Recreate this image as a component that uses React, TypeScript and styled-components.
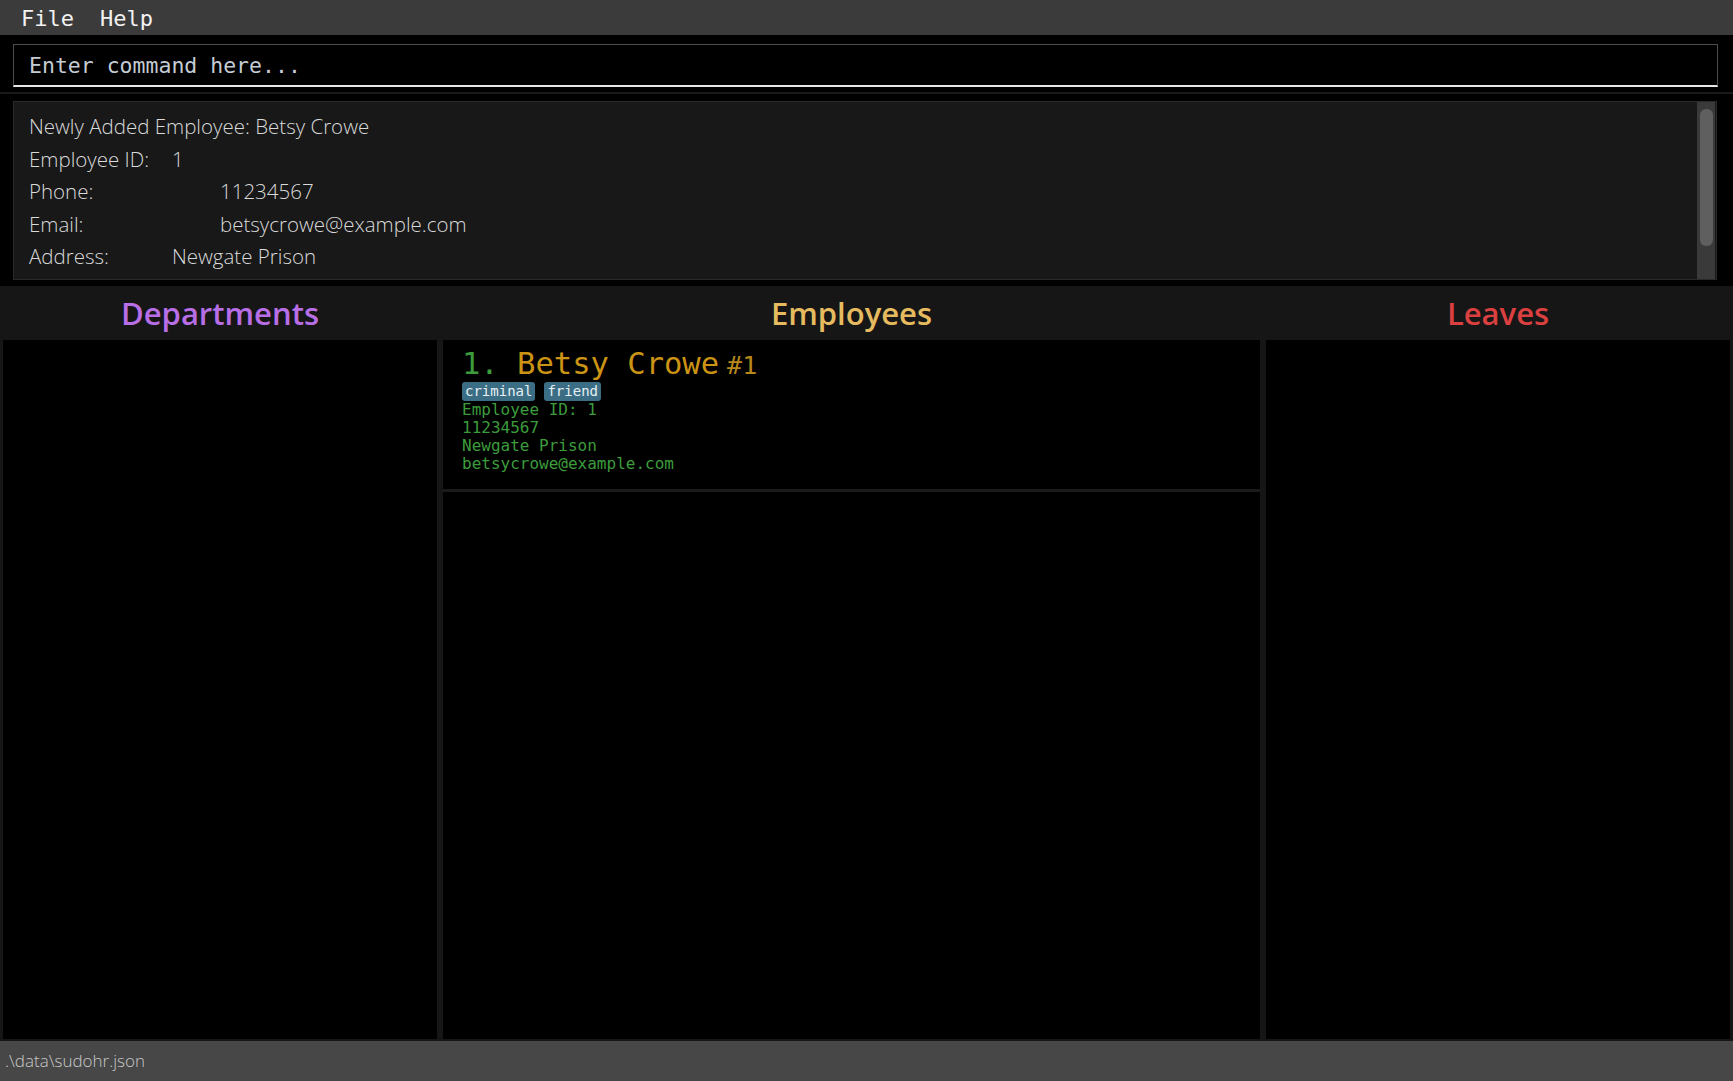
import * as React from 'react';
import styled, { createGlobalStyle } from 'styled-components';

const GlobalStyle = createGlobalStyle`
  html, body {
    margin: 0;
    padding: 0;
    background-color: #000000;
  }
  #root {
    height: 100vh;
  }
  * {
    box-sizing: border-box;
  }
`;

const MONO = `'DejaVu Sans Mono', 'Liberation Mono', monospace`;
const SANS = `'Open Sans', 'Noto Sans', sans-serif`;

const resultLines = [
  { label: 'Employee ID:', value: '1', width: 143 },
  { label: 'Phone:', value: '11234567', width: 191 },
  { label: 'Email:', value: 'betsycrowe@example.com', width: 191 },
  { label: 'Address:', value: 'Newgate Prison', width: 143 },
];

const columns = [
  { title: 'Departments', color: '#b86ee6' },
  { title: 'Employees', color: '#e6bb5f' },
  { title: 'Leaves', color: '#db4040' },
];

const App: React.FC = () => {
  return (
    <>
      <GlobalStyle />
      <Window>
        <MenuBar>
          <MenuItem>File</MenuItem>
          <MenuItem>Help</MenuItem>
        </MenuBar>

        <CommandArea>
          <CommandBox placeholder="Enter command here..." />
        </CommandArea>

        <ResultArea>
          <ResultBox>
            <ResultText>
              <ResultLine>Newly Added Employee: Betsy Crowe</ResultLine>
              {resultLines.map((line) => (
                <ResultLine key={line.label}>
                  <ResultLabel $width={line.width}>{line.label}</ResultLabel>
                  {line.value}
                </ResultLine>
              ))}
            </ResultText>
            <ScrollTrack>
              <ScrollThumb />
            </ScrollTrack>
          </ResultBox>
        </ResultArea>

        <Panels>
          {columns.map((col) => (
            <Column key={col.title}>
              <ColumnHeader $color={col.color}>{col.title}</ColumnHeader>
              <ColumnBody>
                {col.title === 'Employees' && (
                  <Card>
                    <NameRow>
                      <Index>1. </Index>
                      <Name>Betsy Crowe</Name>
                      <EmpId>#1</EmpId>
                    </NameRow>
                    <Tags>
                      <Tag>criminal</Tag>
                      <Tag>friend</Tag>
                    </Tags>
                    <Detail>Employee ID: 1</Detail>
                    <Detail>11234567</Detail>
                    <Detail>Newgate Prison</Detail>
                    <Detail>betsycrowe@example.com</Detail>
                  </Card>
                )}
              </ColumnBody>
            </Column>
          ))}
        </Panels>

        <StatusBar>.\data\sudohr.json</StatusBar>
      </Window>
    </>
  );
};

const Window = styled.div`
  display: flex;
  flex-direction: column;
  height: 100vh;
  background-color: #000000;
  overflow: hidden;
`;

const MenuBar = styled.div`
  display: flex;
  align-items: center;
  height: 35px;
  padding: 2px 0 0 8px;
  background-color: #3b3b3b;
  flex-shrink: 0;
`;

const MenuItem = styled.div`
  padding: 0 13px;
  color: #f2f2f2;
  font-family: ${MONO};
  font-size: 22px;
`;

const CommandArea = styled.div`
  height: 59px;
  padding: 9px 15px 0 13px;
  border-bottom: 2px solid #1a1a1a;
  flex-shrink: 0;
`;

const CommandBox = styled.input`
  display: block;
  width: 100%;
  height: 43px;
  padding: 0 15px;
  background-color: #000000;
  border: 1px solid #4c4c4c;
  border-bottom: 2px solid #e6e6e6;
  color: #c4ccd4;
  font-family: ${MONO};
  font-size: 21.5px;
  outline: none;
  &::placeholder {
    color: #c4ccd4;
    opacity: 1;
  }
`;

const ResultArea = styled.div`
  height: 192px;
  padding: 7px 16px 6px 13px;
  flex-shrink: 0;
`;

const ResultBox = styled.div`
  display: flex;
  height: 100%;
  background-color: #181818;
  border: 1px solid #2a2a2a;
`;

const ResultText = styled.div`
  flex: 1;
  padding: 8px 15px 0;
  color: #dadada;
  font-family: ${SANS};
  font-weight: 300;
  font-size: 20.5px;
  line-height: 32.5px;
`;

const ResultLine = styled.div`
  white-space: nowrap;
`;

const ResultLabel = styled.span<{ $width: number }>`
  display: inline-block;
  width: ${(props) => props.$width}px;
`;

const ScrollTrack = styled.div`
  width: 18px;
  margin-right: 1px;
  padding: 7px 2px 0 3px;
  background-color: #3a3a3a;
`;

const ScrollThumb = styled.div`
  height: 137px;
  border-radius: 6px;
  background-color: #5f5f5f;
`;

const Panels = styled.div`
  flex: 1;
  display: grid;
  grid-template-columns: 440px 823px 1fr;
  background-color: #161616;
  min-height: 0;
`;

const Column = styled.div`
  display: flex;
  flex-direction: column;
  padding: 0 3px 2px;
  min-height: 0;
`;

const ColumnHeader = styled.div<{ $color: string }>`
  display: flex;
  align-items: center;
  justify-content: center;
  height: 54px;
  color: ${(props) => props.$color};
  font-family: ${SANS};
  font-weight: 600;
  font-size: 31px;
  flex-shrink: 0;
`;

const ColumnBody = styled.div`
  flex: 1;
  background-color: #000000;
`;

const Card = styled.div`
  padding: 8px 19px 16px;
  border-bottom: 3px solid #1a1a1a;
  font-family: ${MONO};
`;

const NameRow = styled.div`
  display: flex;
  align-items: baseline;
  line-height: 32px;
  white-space: pre;
`;

const Index = styled.span`
  color: #3c9c3c;
  font-size: 30.5px;
`;

const Name = styled.span`
  color: #cb9414;
  font-size: 30.5px;
`;

const EmpId = styled.span`
  margin-left: 8px;
  color: #b88a1c;
  font-size: 25px;
`;

const Tags = styled.div`
  display: flex;
  gap: 9px;
  height: 19px;
`;

const Tag = styled.span`
  padding: 1px 3px;
  border-radius: 3px;
  background-color: #3b6e85;
  color: #e6f0f4;
  font-size: 14px;
  line-height: 17px;
`;

const Detail = styled.div`
  color: #3c9c3c;
  font-size: 16px;
  line-height: 18px;
`;

const StatusBar = styled.div`
  display: flex;
  align-items: center;
  height: 40px;
  padding: 0 0 2px 5px;
  background-color: #474747;
  color: #c8c8c8;
  font-family: ${SANS};
  font-weight: 300;
  font-size: 17px;
  flex-shrink: 0;
`;

export default App;
